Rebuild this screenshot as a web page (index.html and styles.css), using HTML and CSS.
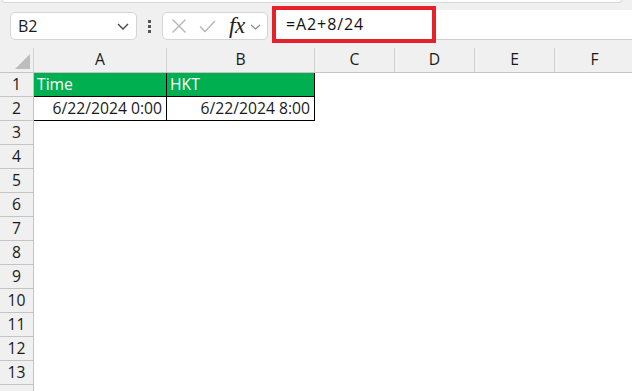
FILE: index.html
```html
<!DOCTYPE html>
<html>
<head>
<meta charset="utf-8">
<link rel="stylesheet" href="styles.css">
</head>
<body>
<div class="app">
  <div class="ribbon"></div>
  <div class="fbar">
    <div class="namebox">
      <span class="nb-text">B2</span>
      <svg class="nb-chev" width="12" height="7" viewBox="0 0 12 7"><path d="M1 1 L6 6 L11 1" fill="none" stroke="#444" stroke-width="1.4"/></svg>
    </div>
    <div class="dots"><i></i><i></i><i></i></div>
    <div class="fxbox">
      <svg class="ic-x" width="16" height="16" viewBox="0 0 16 16"><path d="M1.5 1.5 L14.5 14.5 M14.5 1.5 L1.5 14.5" fill="none" stroke="#b4b4b4" stroke-width="1.3"/></svg>
      <svg class="ic-check" width="17" height="13" viewBox="0 0 17 13"><path d="M1 6.5 L6 11.5 L16 1" fill="none" stroke="#b4b4b4" stroke-width="1.3"/></svg>
      <span class="fx">fx</span>
      <svg class="fx-chev" width="11" height="6" viewBox="0 0 11 6"><path d="M1 1 L5.5 5 L10 1" fill="none" stroke="#8a8a8a" stroke-width="1.2"/></svg>
    </div>
    <div class="formula">=A2+8/24</div>
    <div class="highlight"></div>
  </div>
  <div class="sheet">
    <div class="row hdr">
      <div class="corner"><span class="tri"></span></div>
      <div class="ch">A</div><div class="ch">B</div><div class="ch">C</div><div class="ch">D</div><div class="ch">E</div><div class="ch">F</div>
    </div>
    <div class="row">
      <div class="rh">1</div>
      <div class="cell head">Time</div>
      <div class="cell head">HKT</div>
    </div>
    <div class="row">
      <div class="rh">2</div>
      <div class="cell data last-row">6/22/2024 0:00</div>
      <div class="cell data last-row">6/22/2024 8:00</div>
    </div>
    <div class="row"><div class="rh">3</div></div>
    <div class="row"><div class="rh">4</div></div>
    <div class="row"><div class="rh">5</div></div>
    <div class="row"><div class="rh">6</div></div>
    <div class="row"><div class="rh">7</div></div>
    <div class="row"><div class="rh">8</div></div>
    <div class="row"><div class="rh">9</div></div>
    <div class="row"><div class="rh">10</div></div>
    <div class="row"><div class="rh">11</div></div>
    <div class="row"><div class="rh">12</div></div>
    <div class="row"><div class="rh">13</div></div>
    <div class="row"><div class="rh"></div></div>
  </div>
</div>
</body>
</html>
```
FILE: styles.css
```css
* { box-sizing: border-box; }
html, body { margin: 0; padding: 0; }
body {
  width: 632px;
  height: 391px;
  overflow: hidden;
  background: #f0f0f0;
  font-family: "Open Sans", "Noto Sans", sans-serif;
  color: #1a1a1a;
}
.app { width: 632px; height: 391px; overflow: hidden; }

.ribbon {
  height: 3px;
  margin: 0 10px 0 2px;
  background: #ffffff;
  border: 1px solid #d8d8d8;
  border-top: none;
  border-radius: 0 0 4px 4px;
}

.fbar {
  position: relative;
  height: 37px;
  display: flex;
  align-items: flex-end;
  padding-left: 10px;
  margin-bottom: 8px;
}
.namebox {
  width: 127px;
  height: 28px;
  background: #fff;
  border: 1px solid #d4d4d4;
  border-radius: 5px;
  display: flex;
  align-items: center;
  justify-content: space-between;
  padding: 0 7px 0 7px;
  font-size: 16px;
}
.nb-text { line-height: 1; margin-top: -1px; }
.dots {
  width: 25px;
  height: 28px;
  display: flex;
  flex-direction: column;
  align-items: center;
  justify-content: center;
  gap: 2px;
}
.dots i {
  display: block;
  width: 3px;
  height: 3px;
  background: #555;
}
.fxbox {
  width: 106px;
  height: 28px;
  background: #fff;
  border: 1px solid #d4d4d4;
  border-radius: 5px;
  display: flex;
  align-items: center;
  padding-left: 8px;
}
.ic-x { margin-right: 12px; }
.ic-check { margin-right: 13px; margin-top: 1px; }
.fx {
  font-family: "Liberation Serif", "DejaVu Serif", serif;
  font-style: italic;
  font-size: 23px;
  line-height: 1;
  color: #222;
  margin-top: -2px;
  margin-right: 5px;
  letter-spacing: -0.5px;
}
.fx-chev { margin-top: 2px; }
.formula {
  flex: 1;
  height: 30px;
  margin-left: 4px;
  background: #fff;
  border-bottom: 1px solid #cfcfcf;
  font-size: 16px;
  letter-spacing: 0.9px;
  line-height: 29px;
  padding-left: 14px;
  color: #111;
}
.highlight {
  position: absolute;
  left: 272px;
  top: 3px;
  width: 164px;
  height: 37px;
  border: 4px solid #e8202a;
}

.sheet { background: #fff; }
.row {
  display: grid;
  grid-template-columns: 34px 133px 148px 80px 80px 80px 80px;
  height: 24px;
}
.hdr { background: #f0f0f0; border-bottom: 1px solid #c4c4c4; height: 25px; }
.corner {
  position: relative;
  border-right: 1px solid #d0d0d0;
}
.tri {
  position: absolute;
  right: 3px;
  bottom: 3px;
  width: 0;
  height: 0;
  border-left: 15px solid transparent;
  border-bottom: 15px solid #bdbdbd;
}
.ch {
  border-right: 1px solid #d0d0d0;
  text-align: center;
  font-size: 15.7px;
  line-height: 22px;
  color: #1a1a1a;
}
.rh {
  background: #f0f0f0;
  border-right: 1px solid #c4c4c4;
  border-bottom: 1px solid #c4c4c4;
  text-align: center;
  font-size: 15.7px;
  line-height: 23px;
  color: #1a1a1a;
}
.cell {
  font-size: 15.7px;
  line-height: 23px;
  border-right: 1px solid #000;
  border-bottom: 1px solid #000;
  white-space: nowrap;
  overflow: hidden;
}
.cell.head {
  background: #00b050;
  color: #fff;
  padding-left: 3px;
}
.cell.data {
  text-align: right;
  padding-right: 4px;
}
```
